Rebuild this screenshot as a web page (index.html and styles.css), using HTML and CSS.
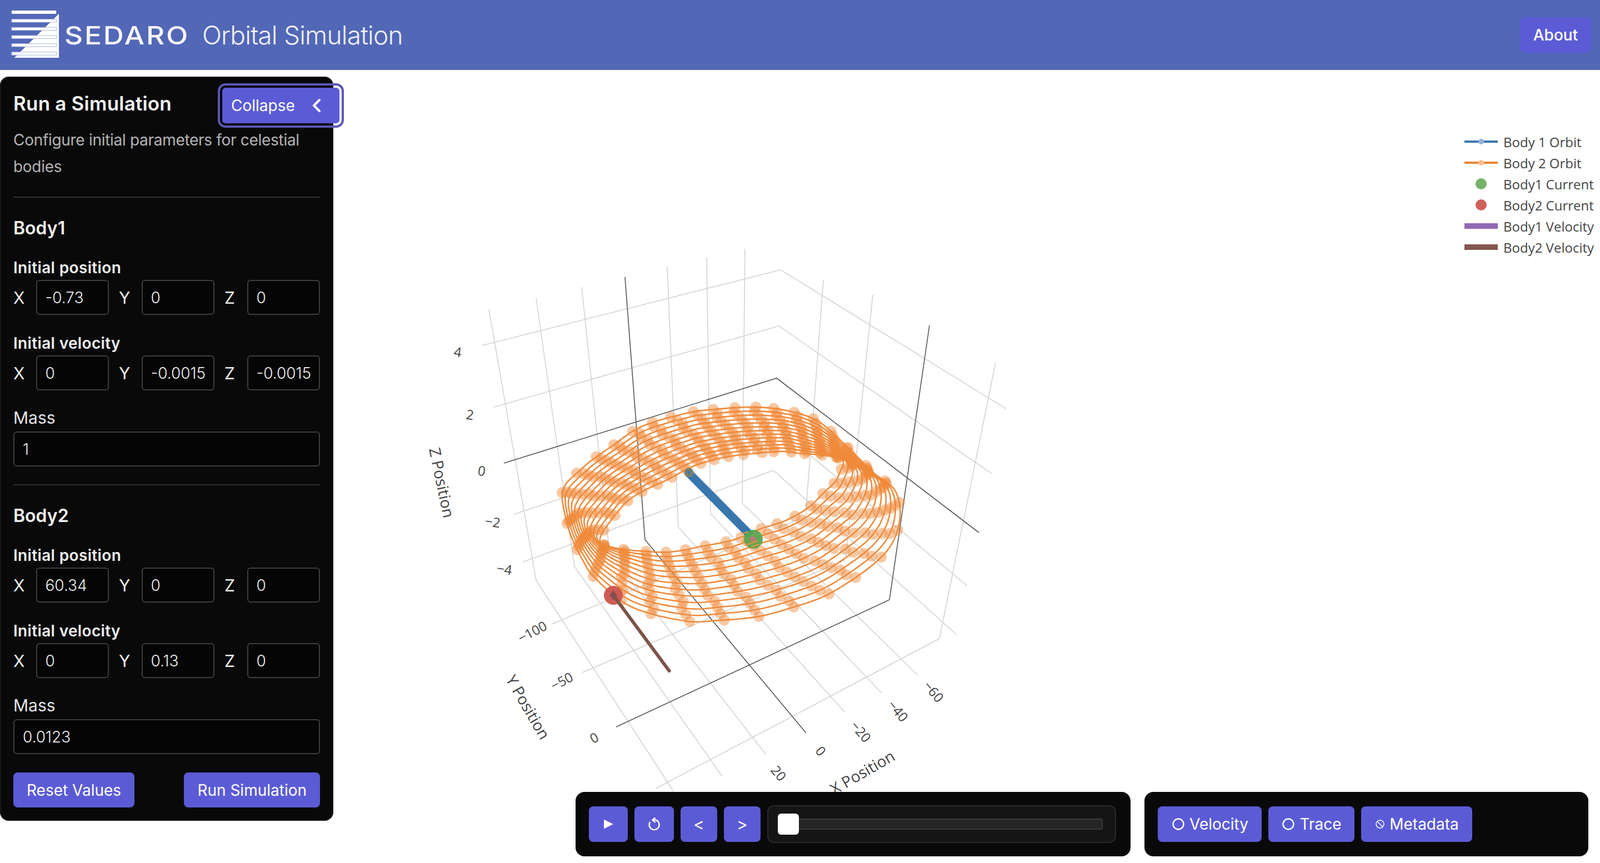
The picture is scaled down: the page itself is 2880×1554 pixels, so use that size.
FILE: index.html
```html
<!DOCTYPE html>
<html lang="en">
<head>
<meta charset="utf-8">
<title>Sedaro Orbital Simulation</title>
<link rel="stylesheet" href="styles.css">
</head>
<body>
<header class="topbar">
  <div class="brand">
    <svg class="logo" viewBox="0 0 90 90" aria-hidden="true">
      <polygon class="logo-fill" points="88,6 88,87 6,87"/>
      <rect class="logo-fill" x="1" y="0" width="82" height="6"/>
      <rect class="logo-bar" x="1" y="16" width="82.5" height="5.5"/>
      <rect class="logo-bar" x="1" y="31" width="82.5" height="5.5"/>
      <rect class="logo-bar" x="1" y="46" width="82.5" height="5.5"/>
      <rect class="logo-bar" x="1" y="61" width="82.5" height="5.5"/>
      <rect class="logo-bar" x="1" y="76.500" width="82.5" height="5.5"/>
    </svg>
    <span class="wordmark">SEDARO</span>
    <h1 class="app-title">Orbital Simulation</h1>
  </div>
  <button class="btn about">About</button>
</header>

<main class="stage">
  <svg id="plot" class="plot" viewBox="0 126 2880 1428" aria-label="3D orbit plot"></svg>

  <ul class="legend">
    <li class="legend-row"><svg class="swatch" viewBox="0 0 60 20"><rect class="s-blue" y="8" width="60" height="4"/><circle class="s-blue-dot" cx="30" cy="10" r="5"/></svg>Body 1 Orbit</li>
    <li class="legend-row"><svg class="swatch" viewBox="0 0 60 20"><rect class="s-orange" y="8" width="60" height="4"/><circle class="s-orange-dot" cx="30" cy="10" r="5"/></svg>Body 2 Orbit</li>
    <li class="legend-row"><svg class="swatch" viewBox="0 0 60 20"><circle class="s-green" cx="30" cy="10" r="10"/></svg>Body1 Current</li>
    <li class="legend-row"><svg class="swatch" viewBox="0 0 60 20"><circle class="s-red" cx="30" cy="10" r="10"/></svg>Body2 Current</li>
    <li class="legend-row"><svg class="swatch" viewBox="0 0 60 20"><rect class="s-purple" y="5" width="60" height="10"/></svg>Body1 Velocity</li>
    <li class="legend-row"><svg class="swatch" viewBox="0 0 60 20"><rect class="s-brown" y="5" width="60" height="10"/></svg>Body2 Velocity</li>
  </ul>

  <aside class="panel">
    <div class="panel-head">
      <h2 class="panel-title">Run a Simulation</h2>
      <button class="btn collapse">Collapse
        <svg class="chev" viewBox="0 0 16 24"><path d="M13 2 3 12l10 10"/></svg>
      </button>
    </div>
    <p class="panel-desc">Configure initial parameters for celestial bodies</p>

    <section class="body-form">
      <h3 class="body-name">Body1</h3>
      <div class="group-label">Initial position</div>
      <div class="xyz">
        <label class="axis">X<input class="field" value="-0.73"></label>
        <label class="axis">Y<input class="field" value="0"></label>
        <label class="axis">Z<input class="field" value="0"></label>
      </div>
      <div class="group-label">Initial velocity</div>
      <div class="xyz">
        <label class="axis">X<input class="field" value="0"></label>
        <label class="axis">Y<input class="field" value="-0.0015"></label>
        <label class="axis">Z<input class="field" value="-0.0015"></label>
      </div>
      <div class="mass-label">Mass</div>
      <input class="field wide" value="1">
    </section>

    <section class="body-form">
      <h3 class="body-name">Body2</h3>
      <div class="group-label">Initial position</div>
      <div class="xyz">
        <label class="axis">X<input class="field" value="60.34"></label>
        <label class="axis">Y<input class="field" value="0"></label>
        <label class="axis">Z<input class="field" value="0"></label>
      </div>
      <div class="group-label">Initial velocity</div>
      <div class="xyz">
        <label class="axis">X<input class="field" value="0"></label>
        <label class="axis">Y<input class="field" value="0.13"></label>
        <label class="axis">Z<input class="field" value="0"></label>
      </div>
      <div class="mass-label">Mass</div>
      <input class="field wide" value="0.0123">
    </section>

    <div class="actions">
      <button class="btn action">Reset Values</button>
      <button class="btn action">Run Simulation</button>
    </div>
  </aside>

  <div class="dock player">
    <button class="btn ctl play" aria-label="Play"><svg class="ico-play" viewBox="0 0 18 18"><path d="M1 1.500v15a.6.600 0 0 0 .9.500L17 9.500a.6.600 0 0 0 0-1L1.900 1a.6.600 0 0 0-.9.500z"/></svg></button>
    <button class="btn ctl replay" aria-label="Replay"><svg class="ico-replay" viewBox="0 0 22 24"><path d="M8 4.500a9 9 0 1 1-5.300 4.300M11.500 1 7.500 4.700l4.300 3.500"/></svg></button>
    <button class="btn ctl step">&lt;</button>
    <button class="btn ctl step">&gt;</button>
    <div class="slider"><div class="track"><div class="thumb"></div></div></div>
  </div>

  <div class="dock toggles">
    <button class="btn toggle velocity"><svg class="ring" viewBox="0 0 22 22"><circle cx="11" cy="11" r="9.500"/></svg>Velocity</button>
    <button class="btn toggle trace"><svg class="ring" viewBox="0 0 22 22"><circle cx="11" cy="11" r="9.500"/></svg>Trace</button>
    <button class="btn toggle metadata"><svg class="ring-off" viewBox="0 0 16 16"><circle cx="8" cy="8" r="7"/><path d="M3.500 3.500l9 9"/></svg>Metadata</button>
  </div>
</main>
<script src="plot.js"></script>
</body>
</html>
```

FILE: styles.css
```css
* { box-sizing: border-box; }
html, body { margin: 0; padding: 0; }
body {
  width: 2880px;
  height: 1554px;
  overflow: hidden;
  background: #fff;
  font-family: Inter, "Liberation Sans", sans-serif;
  color: #eee;
}

/* top bar */
.topbar {
  height: 126px;
  background: #5267b6;
  display: flex;
  align-items: center;
  justify-content: space-between;
  padding: 0 16px 0 20px;
}
.brand { display: flex; align-items: center; }
.logo { width: 88px; height: 88px; flex: none; }
.logo-fill { fill: #fff; }
.logo-bar { fill: #fff; stroke: #aab4e2; stroke-width: 1; }
.wordmark {
  margin-left: 8px;
  width: 233px;
  font-size: 45px;
  font-weight: 500;
  letter-spacing: 2.500px;
  color: #f6f7fc;
  transform: scaleX(1.14);
  transform-origin: left center;
}
.app-title {
  margin: 0 0 0 15px;
  font-size: 46px;
  font-weight: 300;
  letter-spacing: -.8px;
  color: #eef0f8;
}
.btn {
  border: 0;
  background: #5b5bd6;
  color: #fff;
  font-family: inherit;
  font-size: 28px;
  font-weight: 400;
  border-radius: 8px;
  padding: 0;
  display: inline-flex;
  align-items: center;
  justify-content: center;
}
.about { width: 128px; height: 64px; font-weight: 500; }

/* main area */
.stage { position: relative; height: 1428px; padding-top: 12px; }
.plot { position: absolute; left: 0; top: 0; width: 2880px; height: 1428px; }
.plot .grid { fill: none; stroke: #d3d3d3; stroke-width: 1.600; }
.plot .axis-line { fill: none; stroke: #555; stroke-width: 1.600; }
.plot .orbit { fill: none; stroke: #ef8a3a; stroke-width: 2.600; stroke-linejoin: round; }
.plot .dot { fill: #ef8532; fill-opacity: .45; }
.plot .label { font-family: "Open Sans", sans-serif; font-size: 24px; fill: #444; text-anchor: middle; dominant-baseline: central; }
.plot .title { font-size: 28px; }
.plot .blue-bar { stroke: #3a76ae; stroke-width: 15; stroke-linecap: butt; }
.plot .blue-cap { fill: #7a7f6e; }
.plot .blue-tick { stroke: #3a76ae; stroke-width: 2; fill: none; }
.plot .brown-bar { stroke: #7d5348; stroke-width: 6; }
.plot .green-dot { fill: #5aa550; fill-opacity: .95; }
.plot .red-dot { fill: #cd5652; fill-opacity: .97; }
.plot .green-tip { fill: #b87a70; }
.plot .red-tip { fill: #85504a; }
.plot .over { stroke: #f4913f; stroke-width: 2; fill: none; }

/* legend */
.legend {
  position: absolute;
  left: 2636px;
  top: 110px;
  margin: 0;
  padding: 0;
  list-style: none;
  font-family: "Open Sans", sans-serif;
  font-size: 24px;
  color: #444;
  display: flex;
  flex-direction: column;
}
.legend-row { height: 38px; display: flex; align-items: center; gap: 10px; white-space: nowrap; }
.swatch { width: 60px; height: 20px; flex: none; }
.s-blue { fill: #3a76ae; }
.s-blue-dot { fill: #93b4d6; }
.s-orange { fill: #ef8532; }
.s-orange-dot { fill: #f7bf92; }
.s-green { fill: #75b266; }
.s-red { fill: #d0605a; }
.s-purple { fill: #9068b4; }
.s-brown { fill: #84574e; }

/* side panel */
.panel {
  position: relative;
  width: 600px;
  height: 1340px;
  padding: 20px 24px 24px;
  background: #090909;
  border-radius: 16px;
  box-shadow: inset 0 0 0 2px #18181a;
}
.panel-head { display: flex; justify-content: space-between; align-items: flex-start; height: 64px; }
.panel-title { margin: 0; font-size: 35px; line-height: 56px; font-weight: 600; letter-spacing: .2px; color: #f0f0f0; }
.collapse {
  position: relative;
  left: 35px;
  width: 211px;
  height: 64px;
  justify-content: space-between;
  padding: 0 33px 0 16px;
  outline: 4px solid #5a57b5;
  outline-offset: 4px;
  border-radius: 6px;
  font-weight: 400;
}
.chev { width: 16px; height: 24px; fill: none; stroke: #fff; stroke-width: 4; stroke-linecap: round; stroke-linejoin: round; }
.panel-desc {
  margin: 6px 0 0;
  font-size: 28px;
  line-height: 48px;
  letter-spacing: -.3px;
  color: #b4b4b4;
}
.body-form { margin-top: 30px; border-top: 2px solid #2e2e30; }
.body-name { margin: 35px 0 0; font-size: 32px; line-height: 40px; font-weight: 600; color: #eee; }
.group-label { margin-top: 34px; font-size: 28px; line-height: 34px; font-weight: 600; letter-spacing: .35px; color: #eee; }
.xyz { margin-top: 5px; display: grid; grid-template-columns: repeat(3, 172px); column-gap: 18px; }
.axis { display: flex; align-items: center; justify-content: space-between; font-size: 30px; color: #eee; }
.field {
  min-width: 0;
  height: 63px;
  padding: 0 0 0 15px;
  background: #050505;
  border: 2px solid #3d3d40;
  border-radius: 6px;
  color: #eee;
  font-family: inherit;
  font-size: 28px;
  font-weight: 300;
  outline: 0;
}
.axis .field { flex: 0 0 131.500px; width: 131.500px; }
.mass-label { margin-top: 32px; font-size: 30px; line-height: 34px; font-weight: 400; color: #e4e4e4; }
.wide { display: block; width: 100%; margin-top: 8px; }
.body-form + .body-form { margin-top: 32px; }
.actions { margin-top: 33px; display: flex; justify-content: space-between; }
.action { height: 63px; padding: 0 24px; }

/* docks over the plot */
.dock {
  position: absolute;
  top: 1300px;
  height: 116px;
  background: #090909;
  border-radius: 16px;
  display: flex;
  align-items: center;
}
.player { left: 1036px; width: 999px; padding: 0 24px; }
.toggles { left: 2060px; width: 799px; padding: 0 24px; gap: 12px; }
.ctl { height: 64px; margin-right: 12px; }
.play { width: 70px; }
.replay { width: 71px; }
.step { width: 66px; font-size: 30px; }
.ico-play { width: 18px; height: 18px; fill: #fff; }
.ico-replay { width: 22px; height: 24px; fill: none; stroke: #fff; stroke-width: 2.400; stroke-linecap: round; stroke-linejoin: round; }
.slider {
  width: 628px;
  height: 68px;
  background: #151515;
  border: 2px solid #29292b;
  border-radius: 12px;
  padding: 0 22px 0 17px;
  display: flex;
  align-items: center;
}
.track {
  position: relative;
  width: 100%;
  height: 20px;
  background: #252525;
  border: 2px solid #3a3a3a;
  border-radius: 4px;
}
.thumb {
  position: absolute;
  left: -2px;
  top: -11px;
  width: 38px;
  height: 38px;
  background: #fff;
  border-radius: 6px;
}
.toggle { height: 64px; gap: 9px; padding-left: 2px; }
.velocity { width: 187px; }
.trace { width: 155px; }
.metadata { width: 200px; }
.ring { width: 22px; height: 22px; fill: none; stroke: #fff; stroke-width: 2.400; flex: none; }
.ring-off { width: 16px; height: 16px; fill: none; stroke: #fff; stroke-width: 1.500; flex: none; }
```

FILE: plot.js
```js
(function () {
  var NS = 'http://www.w3.org/2000/svg';
  var svg = document.getElementById('plot');

  function el(tag, attrs, parent) {
    var n = document.createElementNS(NS, tag);
    for (var k in attrs) n.setAttribute(k, attrs[k]);
    (parent || svg).appendChild(n);
    return n;
  }
  function poly(points, cls) {
    el('polyline', { points: points.map(function (p) { return p.join(','); }).join(' '), 'class': cls });
  }

  /* gridlines of the 3D scene */
  var grid = [
    [[868,622],[1405,486],[1811,736]],
    [[889,733],[1402,587],[1785,853]],
    [[925,926],[1396,768],[1741,1055]],
    [[941,1012],[1392,847],[1722,1143]],
    [[880,557],[965,1045],[1213,1426]],
    [[965,537],[1034,1020],[1300,1398]],
    [[1047,517],[1097,996],[1378,1358]],
    [[1201,481],[1221,949],[1521,1283]],
    [[1272,464],[1279,925],[1587,1248]],
    [[1341,448],[1336,906],[1652,1216]],
    [[1571,531],[1522,1008],[1048,1211]],
    [[1482,505],[1450,930],[993,1124]],
    [[1792,653],[1691,1150],[1180,1420]]
  ];
  grid.forEach(function (g) { poly(g, 'grid'); });
  [
    [[1125,499],[1161,972],[1451,1320]],
    [[907,834],[1398,681],[1762,959]],
    [[1673,586],[1601,1080],[1109,1309]]
  ].forEach(function (g) { poly(g, 'axis-line'); });

  /* tick labels and axis titles: [text, x, y, rotation] */
  [
    ['4',824,633,8],['2',846,746,8],['0',867,847,8],['\u22122',887,939,8],['\u22124',908,1024,8],
    ['\u2212100',958,1137,-28],['\u221250',1011,1226,-28],['0',1069,1328,-28],
    ['\u221260',1681,1245,50],['\u221240',1617,1280,50],['\u221220',1550,1317,50],['0',1478,1352,50],['20',1402,1392,50],['40',1322,1438,50]
  ].forEach(function (t) {
    el('text', { 'class': 'label', transform: 'translate(' + t[1] + ' ' + t[2] + ') rotate(' + t[3] + ')' }).textContent = t[0];
  });
  [
    ['Z Position',796,869,78],
    ['Y Position',951,1273,60],
    ['X Position',1552,1390,-30]
  ].forEach(function (t) {
    el('text', { 'class': 'label title', transform: 'translate(' + t[1] + ' ' + t[2] + ') rotate(' + t[3] + ')' }).textContent = t[0];
  });

  /* Body 2 orbit family: each line is an interpolation between the
     innermost and the outermost sampled orbit. */
  var inner = [
    [1513,826],[1485,820],[1437,816],[1401,813],[1319,821],[1270,832],[1240,843],[1199,865],[1160,883],[1130,902],[1107,928],[1085,958],
    [1080,975],[1090,982],[1115,988],[1150,992],[1206,994],[1262,984],[1321,972],[1370,952],[1415,937],[1455,914],[1484,886],[1503,868],
    [1512,850],[1517,838],[1518,832],[1516,828],[1515,826]
  ];
  var outer = [
    [1571,850],[1512,792],[1470,757],[1415,739],[1352,733],[1276,738],[1236,744],[1155,768],[1099,805],[1066,828],[1038,852],[1017,874],
    [1012,899],[1025,957],[1048,1007],[1073,1043],[1137,1093],[1232,1118],[1295,1117],[1366,1110],[1429,1093],[1485,1073],[1540,1040],[1579,1010],
    [1603,983],[1617,950],[1620,913],[1611,883],[1593,866]
  ];
  var n = inner.length;

  function cr(p0, p1, p2, p3, u) {
    var u2 = u * u, u3 = u2 * u;
    return 0.5 * (2 * p1 + (p2 - p0) * u + (2 * p0 - 5 * p1 + 4 * p2 - p3) * u2 + (3 * p1 - p0 - 3 * p2 + p3) * u3);
  }
  function sample(curve, s) {
    var i = Math.floor(s), u = s - i;
    var a = curve[(i - 1 + n) % n], b = curve[i % n], c = curve[(i + 1) % n], d = curve[(i + 2) % n];
    return [cr(a[0], b[0], c[0], d[0], u), cr(a[1], b[1], c[1], d[1], u)];
  }

  var LINES = 13, DOTS = 32, orbitGroup = el('g', {}), dotGroup = el('g', {});
  for (var l = 0; l < LINES; l++) {
    var k = l / (LINES - 1), pts = [], times = [0], total = 0;
    for (var j = 0; j <= n * 8; j++) {
      var a = sample(inner, (j / 8) % n), b = sample(outer, (j / 8) % n);
      var p = [a[0] + (b[0] - a[0]) * k, a[1] + (b[1] - a[1]) * k];
      pts.push(p);
      if (j > 0) {
        var q = pts[j - 1], ds = Math.hypot(p[0] - q[0], p[1] - q[1]);
        var speed = (34 + 28 * (p[1] - 730) / 390) * (0.85 + 0.2 * k);
        total += ds / speed;
        times.push(total);
      }
    }
    el('polyline', {
      'class': 'orbit',
      points: pts.map(function (v) { return v[0].toFixed(1) + ',' + v[1].toFixed(1); }).join(' ')
    }, orbitGroup);
    var idx = 0;
    for (var d = 0; d < DOTS; d++) {
      var target = ((d + 0.15 + k * 2.2) % DOTS) / DOTS * total;
      idx = 0;
      while (idx < times.length - 1 && times[idx] < target) idx++;
      el('circle', { 'class': 'dot', cx: pts[idx][0].toFixed(1), cy: pts[idx][1].toFixed(1), r: 10 }, dotGroup);
    }
  }
  svg.insertBefore(dotGroup, orbitGroup);

  /* velocity vectors and current-position markers */
  el('line', { 'class': 'blue-bar', x1: 1240, y1: 852, x2: 1352, y2: 965 });
  el('circle', { 'class': 'blue-cap', cx: 1240, cy: 851, r: 8.500 });
  el('path', { 'class': 'blue-tick', d: 'M1236 850h8M1240 850v6' });
  el('circle', { 'class': 'green-dot', cx: 1356, cy: 971, r: 17 });
  el('polygon', { 'class': 'green-tip', points: '1355,964 1362,971 1355,978 1348,971' });
  el('path', { 'class': 'over', d: 'M1335 961l11 -3M1341 982l23 -8M1352 985l15 -5' });
  el('circle', { 'class': 'red-dot', cx: 1104, cy: 1072, r: 17 });
  el('line', { 'class': 'brown-bar', x1: 1104, y1: 1072, x2: 1206, y2: 1210 });
  el('polygon', { 'class': 'red-tip', points: '1104,1063 1111,1072 1104,1081 1097,1072' });
})();
```
